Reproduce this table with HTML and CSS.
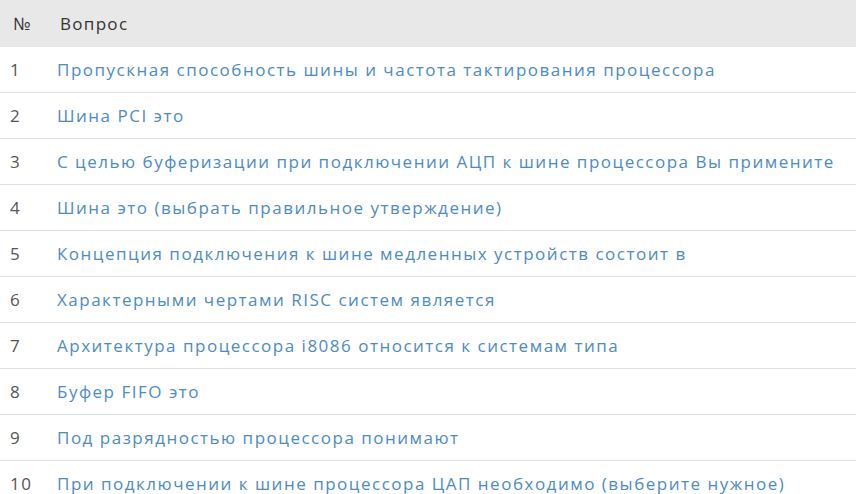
FILE: index.html
```html
<!DOCTYPE html>
<html lang="ru">
<head>
<meta charset="utf-8">
<link rel="stylesheet" href="styles.css">
</head>
<body>
<table class="qtable">
  <thead>
    <tr><th class="num">№</th><th class="q">Вопрос</th></tr>
  </thead>
  <tbody>
    <tr><td class="num">1</td><td class="q"><a href="#">Пропускная способность шины и частота тактирования процессора</a></td></tr>
    <tr><td class="num">2</td><td class="q"><a href="#">Шина PCI это</a></td></tr>
    <tr><td class="num">3</td><td class="q"><a href="#">С целью буферизации при подключении АЦП к шине процессора Вы примените</a></td></tr>
    <tr><td class="num">4</td><td class="q"><a href="#">Шина это (выбрать правильное утверждение)</a></td></tr>
    <tr><td class="num">5</td><td class="q"><a href="#">Концепция подключения к шине медленных устройств состоит в</a></td></tr>
    <tr><td class="num">6</td><td class="q"><a href="#">Характерными чертами RISC систем является</a></td></tr>
    <tr><td class="num">7</td><td class="q"><a href="#">Архитектура процессора i8086 относится к системам типа</a></td></tr>
    <tr><td class="num">8</td><td class="q"><a href="#">Буфер FIFO это</a></td></tr>
    <tr><td class="num">9</td><td class="q"><a href="#">Под разрядностью процессора понимают</a></td></tr>
    <tr><td class="num">10</td><td class="q"><a href="#">При подключении к шине процессора ЦАП необходимо (выберите нужное)</a></td></tr>
  </tbody>
</table>
</body>
</html>
```
FILE: styles.css
```css
html, body {
  margin: 0;
  padding: 0;
  background: #fff;
}
body {
  font-family: "Open Sans", "Liberation Sans", sans-serif;
  font-size: 17px;
  letter-spacing: 1.5px;
  color: #555;
}
.qtable {
  width: 100%;
  border-collapse: collapse;
}
.qtable th {
  background: #e8e8e8;
  color: #333;
  font-weight: normal;
  text-align: left;
  height: 47px;
  padding: 0;
  vertical-align: middle;
  letter-spacing: 1.3px;
}
.qtable th.q { padding-left: 3px; }
.qtable td {
  height: 45px;
  padding: 0;
  border-bottom: 1px solid #d9e4e2;
  vertical-align: middle;
}
.qtable .num {
  width: 47px;
  padding-left: 10px;
}
.qtable th.num { padding-left: 13px; width: 44px; }
.qtable a {
  color: #4e8bc2;
  text-decoration: none;
}
```
